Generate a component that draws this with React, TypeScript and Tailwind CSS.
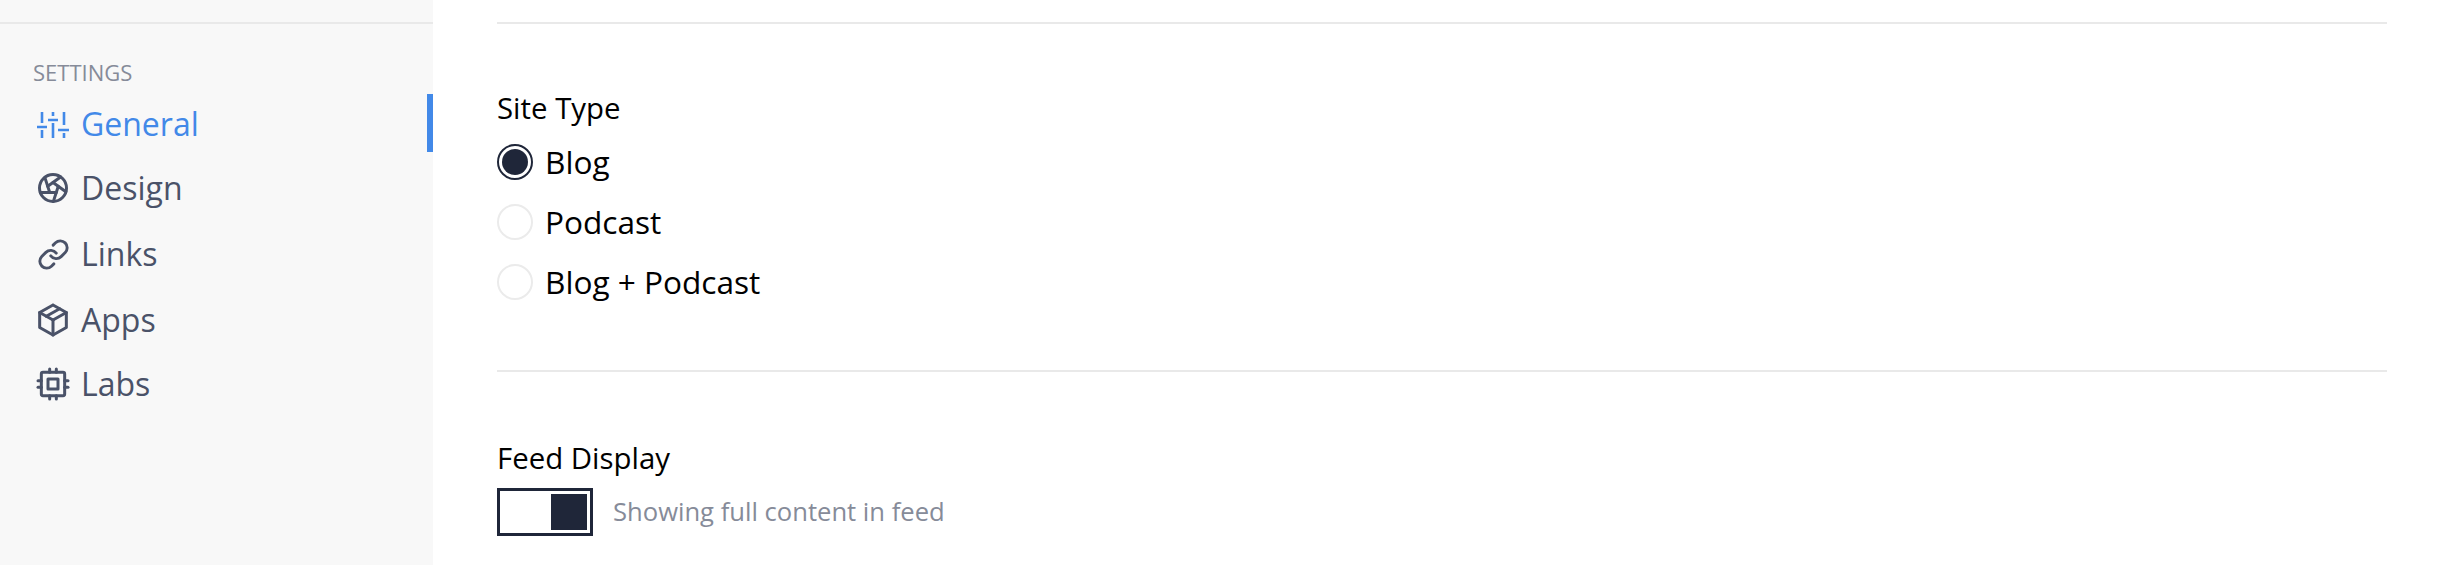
import { Link } from 'lucide-react'
import { TbAperture, TbPackage, TbCpu } from 'react-icons/tb'

function SlidersIcon() {
  return (
    <svg width="36" height="36" viewBox="0 0 36 36" fill="none" stroke="currentColor" strokeWidth="2.6" className="shrink-0">
      <path d="M7 6v11M7 24v8M2 21h10M18 6v4M18 17v15M13 14h10M29 6v13M29 27v5M23 24h11" />
    </svg>
  )
}

function LinkIcon() {
  return (
    <span className="flex h-[36px] w-[36px] shrink-0 items-center justify-center">
      <Link size={33} strokeWidth={2.1} />
    </span>
  )
}

const navItems = [
  { label: 'General', icon: <SlidersIcon />, active: true, rowClass: 'h-[58px] pt-[2px]' },
  { label: 'Design', icon: <TbAperture size={36} strokeWidth={2} className="shrink-0" />, rowClass: 'mt-[3px] h-[66px]' },
  { label: 'Links', icon: <LinkIcon />, rowClass: 'h-[66px]' },
  { label: 'Apps', icon: <TbPackage size={40} strokeWidth={1.8} className="-mx-[2px] shrink-0" />, rowClass: 'h-[66px]' },
  { label: 'Labs', icon: <TbCpu size={40} strokeWidth={1.8} className="-mx-[2px] shrink-0" />, rowClass: 'h-[62px]' },
]

const siteTypes = ['Blog', 'Podcast', 'Blog + Podcast']

function Sidebar() {
  return (
    <aside className="w-[433px] shrink-0 bg-[#f8f8f8]">
      <div className="h-[24px] border-b-2 border-[#e9e9e9]" />
      <div className="mb-[3px] pt-[29px] pl-[33px] text-[22px] leading-[38px] text-[#868b99]">SETTINGS</div>
      {navItems.map((item) => (
        <div
          key={item.label}
          className={`flex items-center pl-[35px] text-[32px] ${item.rowClass} ${
            item.active ? 'border-r-[6px] border-[#4289e8] text-[#4289e8]' : 'text-[#4a5268]'
          }`}
        >
          {item.icon}
          <span className="ml-[10px]">{item.label}</span>
        </div>
      ))}
    </aside>
  )
}

function Radio({ label, checked }: { label: string; checked?: boolean }) {
  return (
    <div className="flex h-[60px] items-center text-[31.6px] text-black">
      <span
        className={`flex h-[36px] w-[36px] items-center justify-center rounded-full border-2 bg-white ${
          checked ? 'border-[#1f2639]' : 'border-[#ebebeb]'
        }`}
      >
        {checked && <span className="h-[26px] w-[26px] rounded-full bg-[#1f2639]" />}
      </span>
      <span className="ml-[12px]">{label}</span>
    </div>
  )
}

export default function App() {
  return (
    <div className="flex h-[565px] overflow-hidden bg-white font-['Open_Sans',sans-serif]">
      <Sidebar />
      <main className="w-[1890px] ml-[64px]">
        <div className="h-[24px] border-b-2 border-[#e9e9e9]" />
        <section className="h-[348px] border-b-2 border-[#e9e9e9] pt-[62px]">
          <div className="text-[29.4px] leading-[44px] text-black">Site Type</div>
          <div className="mt-[2px]">
            {siteTypes.map((t, i) => (
              <Radio key={t} label={t} checked={i === 0} />
            ))}
          </div>
        </section>
        <section className="pt-[64px]">
          <div className="text-[29.4px] leading-[44px] text-black">Feed Display</div>
          <div className="mt-[8px] flex items-center">
            <div className="flex h-[48px] w-[96px] items-center justify-end border-[3px] border-[#1f2639] pr-[3px]">
              <div className="h-[36px] w-[36px] bg-[#1f2639]" />
            </div>
            <span className="ml-[20px] text-[25.6px] text-[#868b99]">Showing full content in feed</span>
          </div>
        </section>
      </main>
    </div>
  )
}
